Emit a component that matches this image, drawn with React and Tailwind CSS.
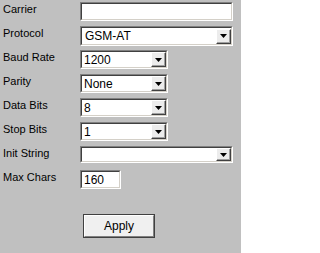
import React from "react";

function Arrow() {
  return (
    <svg width="7" height="4" viewBox="0 0 7 4">
      <path d="M0 0h7L3.5 4z" fill="#000" />
    </svg>
  );
}

function Sunken({ className = "", children }) {
  return (
    <div className={`border border-t-[#808080] border-l-[#808080] border-b-white border-r-white ${className}`}>
      <div className="h-full w-full border border-t-[#404040] border-l-[#404040] border-b-[#d4d0c8] border-r-[#d4d0c8] bg-white flex items-center">
        {children}
      </div>
    </div>
  );
}

function DropBtn({ small }) {
  return (
    <div className={`ml-auto mr-[0px] ${small ? "w-[15px] h-[13px]" : "w-[15px] h-[15px]"} bg-[#ececec] border border-t-white border-l-white border-b-[#404040] border-r-[#404040] flex items-center justify-center shadow-[inset_-1px_-1px_0_#a0a0a0]`}>
      <Arrow />
    </div>
  );
}

function Row({ label, children, h = "h-[19px]" }) {
  return (
    <div className={`flex ${h}`}>
      <div className="w-[80px] pl-[3px] mt-[1px] leading-[13px] text-[11px] text-black">{label}</div>
      {children}
    </div>
  );
}

export default function App() {
  return (
    <div
      className="w-[241px] h-[253px] bg-[#c0c0c0] overflow-hidden pt-[2px] flex flex-col gap-[5px] text-black"
      style={{ fontFamily: '"Liberation Sans", Arial, sans-serif' }}
    >
      <Row label="Carrier">
        <Sunken className="w-[153px] h-[19px]" />
      </Row>
      <Row label="Protocol">
        <Sunken className="w-[153px] h-[20px]">
          <span className="pl-[3px] text-[12px] leading-none">GSM-AT</span>
          <DropBtn />
        </Sunken>
      </Row>
      <Row label="Baud Rate">
        <Sunken className="w-[88px] h-[19px]">
          <span className="pl-[2px] text-[12px] leading-none">1200</span>
          <DropBtn />
        </Sunken>
      </Row>
      <Row label="Parity">
        <Sunken className="w-[88px] h-[19px]">
          <span className="pl-[2px] text-[12px] leading-none">None</span>
          <DropBtn />
        </Sunken>
      </Row>
      <Row label="Data Bits">
        <Sunken className="w-[88px] h-[19px]">
          <span className="pl-[2px] text-[12px] leading-none">8</span>
          <DropBtn />
        </Sunken>
      </Row>
      <Row label="Stop Bits">
        <Sunken className="w-[88px] h-[19px]">
          <span className="pl-[2px] text-[12px] leading-none">1</span>
          <DropBtn />
        </Sunken>
      </Row>
      <Row label="Init String">
        <Sunken className="w-[153px] h-[17px]">
          <DropBtn small />
        </Sunken>
      </Row>
      <Row label="Max Chars">
        <Sunken className="w-[41px] h-[19px]">
          <span className="pl-[2px] text-[12px] leading-none">160</span>
        </Sunken>
      </Row>
      <div className="flex pl-[83px] mt-[20px]">
        <div className="w-[72px] h-[24px] border border-[#404040]">
          <div className="h-full w-full bg-[#f0f0f0] border border-t-white border-l-white border-b-[#808080] border-r-[#808080] flex items-center justify-center text-[12px]">
            Apply
          </div>
        </div>
      </div>
    </div>
  );
}
